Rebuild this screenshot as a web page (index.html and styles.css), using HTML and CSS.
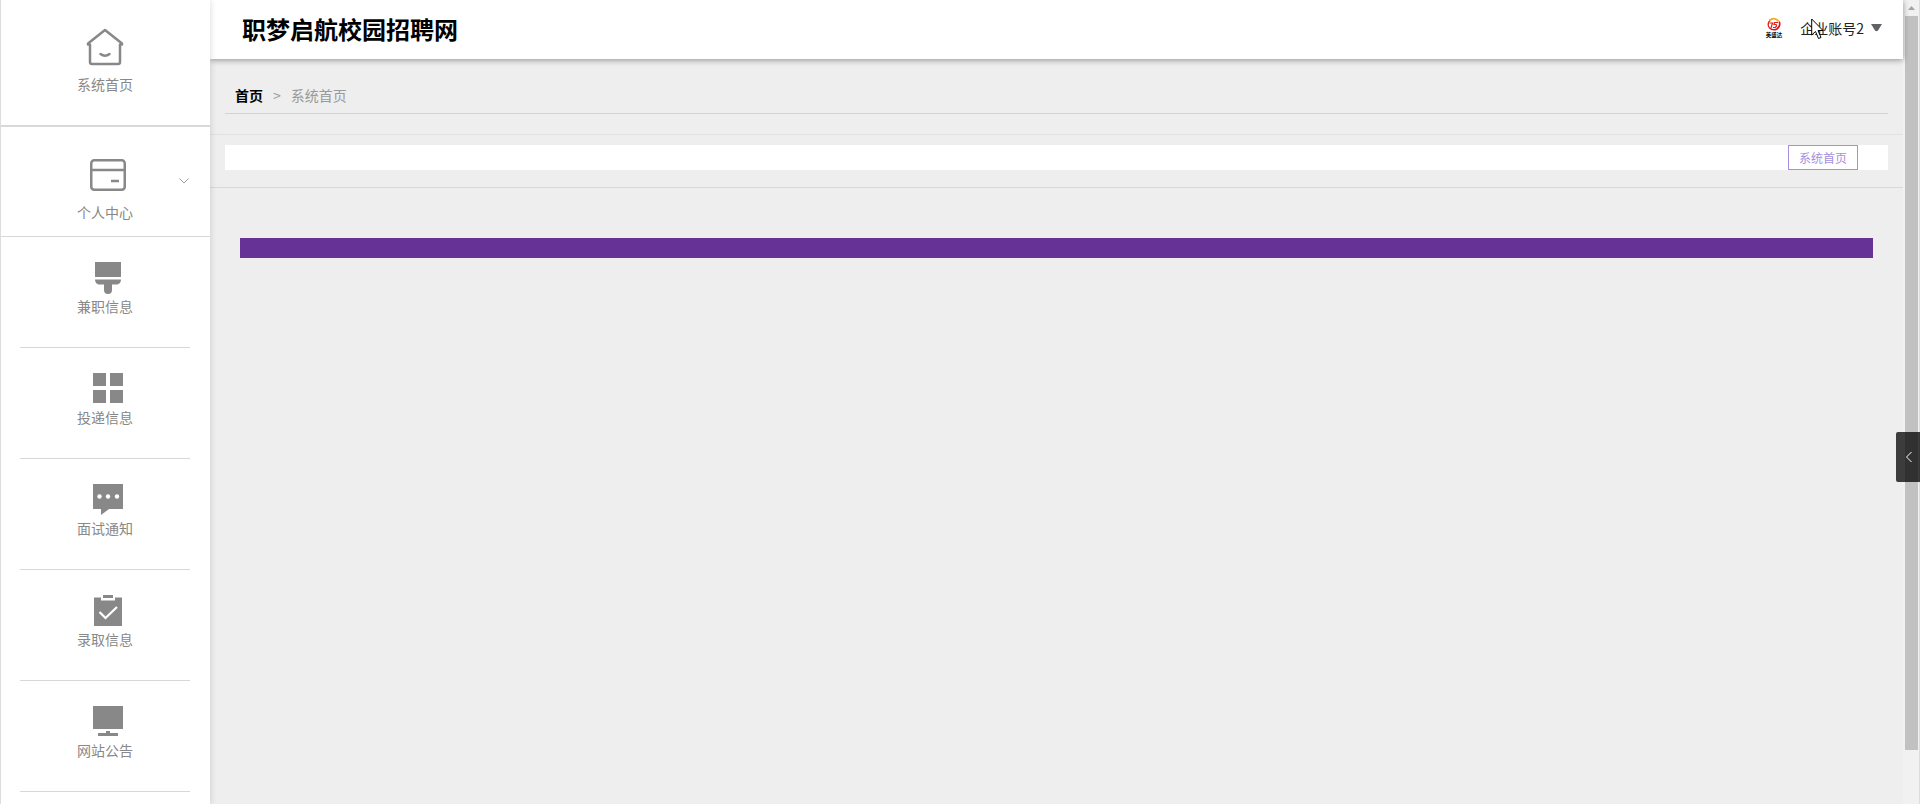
FILE: index.html
```html
<!DOCTYPE html>
<html lang="zh-CN">
<head>
    <meta charset="UTF-8">
    <meta name="viewport" content="width=device-width, initial-scale=1">
    <title>职梦启航校园招聘网</title>
    <link rel="stylesheet" href="styles.css">
</head>
<body>
    <div class="layout">
        <!-- 左侧菜单 -->
        <nav class="sidebar">
            <a class="menu-home" href="#">
                <svg width="38" height="38" viewBox="0 0 38 38" fill="none" stroke="#888" stroke-width="2.500" stroke-linecap="round" stroke-linejoin="round">
                    <path d="M2 15.500L19 2l17 13.500v1h-2V34a2 2 0 0 1-2 2H6a2 2 0 0 1-2-2V16.500H2z" />
                    <path d="M14.500 26q4.500 3.500 9 0" />
                </svg>
                <span>系统首页</span>
            </a>
            <a class="menu-center" href="#">
                <svg class="menu-icon" width="36" height="32" viewBox="0 0 36 32" fill="none" stroke="#888" stroke-width="2.500">
                    <rect x="1.250" y="1.250" width="33.500" height="29.500" rx="3" />
                    <path d="M1 11h34M21 22h8" />
                </svg>
                <span>个人中心</span>
                <svg class="menu-arrow" width="10" height="6" viewBox="0 0 10 6" fill="none" stroke="#999"><path d="M.5.5L5 5 9.500.5" /></svg>
            </a>
            <ul class="menu-list">
                <li><a href="#">
                    <svg class="menu-icon" width="32" height="32" viewBox="0 0 32 32" fill="#888">
                        <path d="M3 0h26v15H3zM3 17.500h26c0 3-2 5-5 5h-4V28a4 4 0 0 1-8 0v-5.500H8c-3 0-5-2-5-5z" />
                    </svg>
                    <span>兼职信息</span>
                </a></li>
                <li><a href="#">
                    <svg class="menu-icon" width="32" height="32" viewBox="0 0 32 32" fill="#888">
                        <path d="M1 0h13v13H1zM18 0h13v13H18zM1 17h13v13H1zM18 17h13v13H18z" />
                    </svg>
                    <span>投递信息</span>
                </a></li>
                <li><a href="#">
                    <svg class="menu-icon" width="32" height="32" viewBox="0 0 32 32" fill="#888">
                        <path d="M1 0h30v25H17l-8 6v-6H1z" />
                        <g fill="#fff"><circle cx="7.500" cy="12.500" r="2.200" /><circle cx="16" cy="12.500" r="2.200" /><circle cx="25" cy="12.500" r="2.200" /></g>
                    </svg>
                    <span>面试通知</span>
                </a></li>
                <li><a href="#">
                    <svg class="menu-icon" width="32" height="32" viewBox="0 0 32 32" fill="#888">
                        <path d="M11 0h10v3H11zM2 2.500h7v3h14v-3h7V31H2z" />
                        <path d="M7.500 17l6 6L25 12" fill="none" stroke="#fff" stroke-width="2.200" />
                    </svg>
                    <span>录取信息</span>
                </a></li>
                <li><a href="#">
                    <svg class="menu-icon" width="32" height="32" viewBox="0 0 32 32" fill="#888">
                        <path d="M1 0h30v23H1zM14 25h4v2h8v3H6v-3h8z" />
                    </svg>
                    <span>网站公告</span>
                </a></li>
            </ul>
        </nav>

        <div class="page">
            <!-- 顶部 -->
            <header class="header">
                <h1>职梦启航校园招聘网</h1>
                <button class="user" type="button">
                    <svg class="user-logo" width="18" height="22" viewBox="0 0 18 22">
                        <path d="M4.500 11A5.800 5.800 0 0 1 5 3.500" fill="none" stroke="#e21b1b" stroke-width="1.300" />
                        <path d="M4.500 3.500Q9-.5 13.500 4" fill="none" stroke="#f5a623" stroke-width="1.800" />
                        <path d="M14.200 4.500Q16 9 12 12q-4 2-7.500-1" fill="none" stroke="#d8141c" stroke-width="1.600" />
                        <path d="M4.500 6h3l-1.500 5M13 5.500H9.500L9 7.500h2q1.500 1.500-1 3H8" fill="none" stroke="#e21b1b" stroke-width="1.200" />
                        <text x="9" y="20" text-anchor="middle" font-size="5.500" font-weight="bold">英盛达</text>
                    </svg>
                    <span>企业账号2</span>
                    <svg width="11" height="8" viewBox="0 0 11 8" fill="#606266"><path d="M0 0h11L7 6.500q-1.500 1.500-3 0z" /></svg>
                </button>
            </header>

            <!-- 面包屑 -->
            <div class="breadcrumb">
                <a href="#">首页</a>
                <i>&gt;</i>
                <span>系统首页</span>
            </div>

            <!-- 页签 -->
            <div class="tags">
                <div class="tags-bar">
                    <a class="tag" href="#">系统首页</a>
                </div>
            </div>

            <main class="content">
                <div class="banner"></div>
            </main>
        </div>

        <!-- 滚动条 -->
        <div class="scroll">
            <svg width="13" height="16" viewBox="0 0 13 16" fill="#a3a3a3"><path d="M3 10l3.500-4L10 10z" /></svg>
            <div class="scroll-thumb"></div>
            <div class="scroll-rest"></div>
        </div>
    </div>

    <button class="drawer" type="button" aria-label="展开">
        <svg width="8" height="12" viewBox="0 0 8 12" fill="none" stroke="#fff"><path d="M6.500 1l-5 5 5 5" /></svg>
    </button>
    <svg class="cursor" width="13" height="22" viewBox="0 0 13 22" fill="#fff" stroke="#000"><path d="M.7 1v16l3.800-3.500L7.500 20.500l2.500-1-3-7H12z" /></svg>
</body>
</html>
```

FILE: styles.css
```css
* {
    box-sizing: border-box;
}

body {
    margin: 0;
    font-family: "Noto Sans CJK SC", sans-serif;
    font-size: 14px;
    line-height: 20px;
    background: #eee;
    overflow: hidden;
}

a {
    color: inherit;
    text-decoration: none;
}

svg {
    display: block;
}

.layout {
    display: flex;
    height: 100vh;
}

/* 左侧菜单 */
.sidebar {
    position: relative;
    z-index: 2;
    flex: 0 0 210px;
    background: #fff;
    border-left: 1px solid #ddd;
    box-shadow: 1px 0 6px rgba(0, 0, 0, 0.12);
    color: #888;
    overflow: hidden;
}

.menu-home,
.menu-center,
.menu-list a {
    display: flex;
    flex-direction: column;
    align-items: center;
}

.menu-home {
    height: 127px;
    padding: 28px 1px 0 0;
    gap: 8px;
    border-bottom: 2px solid #d8d8d8;
}

.menu-center {
    position: relative;
    height: 110px;
    padding: 32px 1px 0 0;
    gap: 11px;
    border-bottom: 1px solid #d8d8d8;
}

.menu-icon {
    margin-left: 6px;
}

.menu-arrow {
    position: absolute;
    right: 21px;
    top: 51px;
}

.menu-list {
    margin: 0;
    padding: 0 20px 0 19px;
    list-style: none;
}

.menu-list a {
    height: 111px;
    padding-top: 25px;
    gap: 2px;
    border-bottom: 1px solid #d8d8d8;
}

/* 右侧页面 */
.page {
    flex: 1;
    min-width: 0;
}

.header {
    position: relative;
    display: flex;
    align-items: center;
    justify-content: space-between;
    height: 59px;
    padding: 0 21px 2px 32px;
    background: #fff;
    box-shadow: 0 1px 6px rgba(0, 0, 0, 0.4);
}

.header h1 {
    margin: 0;
    font-size: 24px;
    line-height: 32px;
    color: #000;
}

.user {
    display: flex;
    align-items: center;
    padding: 0 0 2px;
    border: none;
    background: none;
    font: inherit;
    color: #222;
    gap: 7px;
    cursor: pointer;
}

.user-logo {
    margin-right: 10px;
}

.breadcrumb {
    display: flex;
    gap: 10px;
    margin: 26px 15px 20px;
    padding: 0 10px 8px;
    border-bottom: 1px solid #d4d4d4;
    color: #999;
}

.breadcrumb a {
    font-weight: bold;
    color: #000;
}

.breadcrumb i {
    font-style: normal;
}

.tags {
    padding: 10px 15px 17px;
    border-top: 1px solid #e2e2e2;
    border-bottom: 1px solid #d8d8d8;
}

.tags-bar {
    display: flex;
    justify-content: flex-end;
    padding-right: 30px;
    background: #fff;
}

.tag {
    height: 25px;
    padding: 0 10px;
    border: 1px solid #a48fe0;
    font-size: 12px;
    line-height: 24px;
    color: #a48fe0;
}

.content {
    padding: 50px 30px;
}

.banner {
    height: 20px;
    background: #663296;
}

/* 滚动条 */
.scroll {
    display: flex;
    flex-direction: column;
    flex: 0 0 17px;
    padding: 0 1px 0 2px;
    background: #f1f1f1;
    border-right: 1px solid #ddd;
}

.scroll-thumb {
    flex: 734;
    background: #c1c1c1;
}

.scroll-rest {
    flex: 54;
}

.drawer {
    position: absolute;
    z-index: 3;
    right: 0;
    top: 432px;
    display: flex;
    align-items: center;
    width: 24px;
    height: 50px;
    padding: 0 0 0 9px;
    border: none;
    border-radius: 2px 0 0 2px;
    background: rgba(0, 0, 0, 0.75);
}

.cursor {
    position: absolute;
    z-index: 4;
    right: 96px;
    top: 18px;
}
```
